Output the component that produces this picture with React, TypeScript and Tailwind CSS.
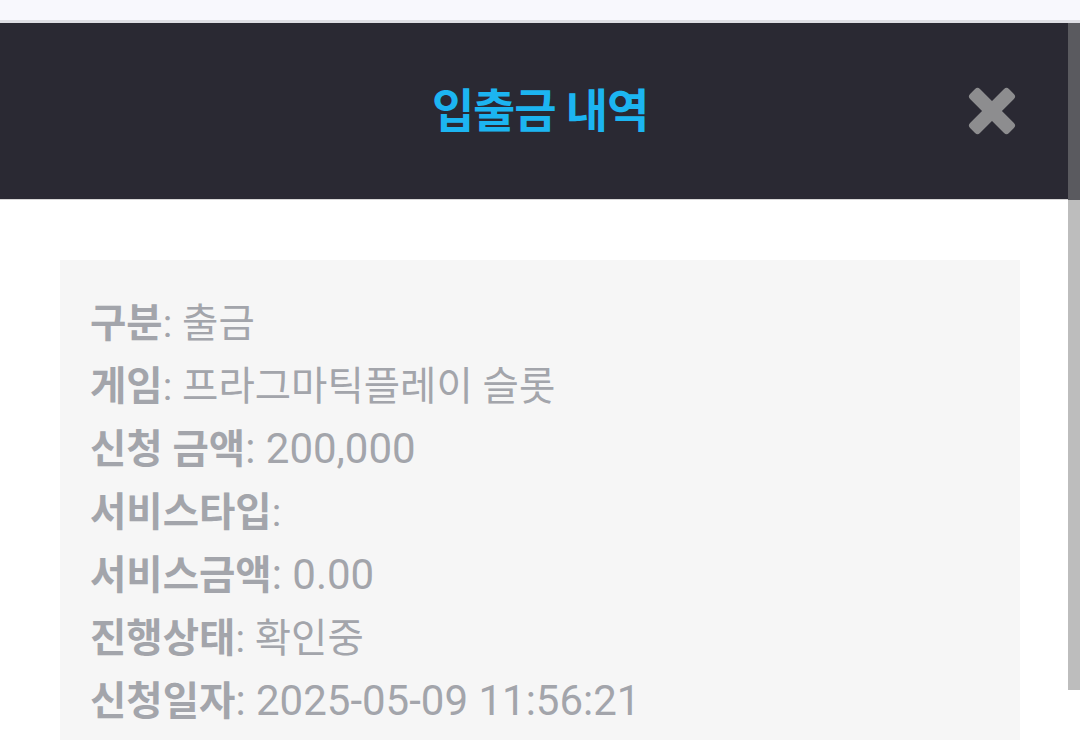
const rows: { label: string; value: string; num?: boolean }[] = [
  { label: "구분", value: "출금" },
  { label: "게임", value: "프라그마틱플레이 슬롯" },
  { label: "신청 금액", value: "200,000", num: true },
  { label: "서비스타입", value: "" },
  { label: "서비스금액", value: "0.00", num: true },
  { label: "진행상태", value: "확인중" },
  { label: "신청일자", value: "2025-05-09 11:56:21", num: true },
];

function CloseIcon() {
  return (
    <svg width="50" height="50" viewBox="0 0 50 50" fill="currentColor">
      <g transform="rotate(45 25 25)">
        <rect x="-2.5" y="18" width="55" height="14" rx="3.5" />
        <rect x="18" y="-2.5" width="14" height="55" rx="3.5" />
      </g>
    </svg>
  );
}

export default function App() {
  return (
    <div
      className="relative h-[740px] w-[1080px] overflow-hidden bg-white"
      style={{ fontFamily: "Roboto, 'Noto Sans CJK KR', sans-serif" }}
    >
      <div className="h-[20px] bg-[#f8f8fd]" />
      <div className="h-[3px] bg-[#dedee4]" />
      <header className="relative flex h-[177px] items-center justify-center border-b border-[#d6d6d6] bg-[#2a2933]">
        <h1 className="text-[46px] font-bold leading-none tracking-tight text-[#1cb5f1]">
          입출금 내역
        </h1>
        <button className="absolute right-[63px] top-[63px] text-[#8d8d8f]">
          <CloseIcon />
        </button>
      </header>

      <main className="px-[60px] pt-[60px]">
        <div className="bg-[#f6f6f6] px-[30px] pt-[33px] pb-10">
          {rows.map((r) => (
            <div
              key={r.label}
              className="text-[39.5px] leading-[62.5px] text-[#a3a5ab]"
            >
              <span className="font-bold">{r.label}</span>
              <span className={r.num ? "text-[42px]" : ""}>: {r.value}</span>
            </div>
          ))}
        </div>
      </main>

      <div className="absolute right-0 top-[23px] w-[12px]">
        <div className="h-[177px] bg-[#5a5a5f]" />
        <div className="h-[490px] bg-[#bdbdbd]" />
      </div>
    </div>
  );
}
